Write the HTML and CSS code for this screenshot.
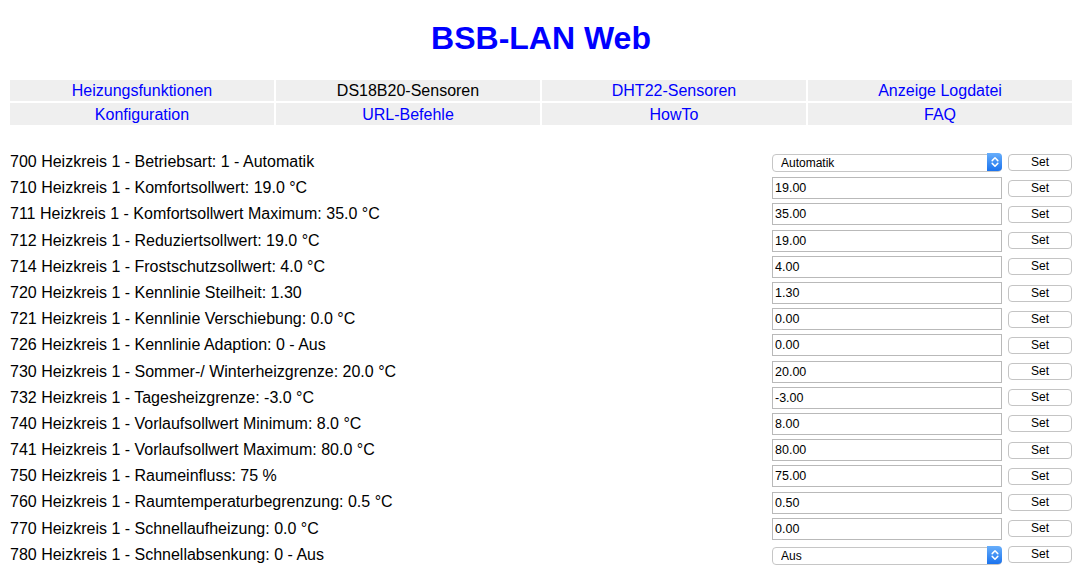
FILE: index.html
```html
<!DOCTYPE html>
<html lang="de">
<head>
<meta charset="utf-8">
<title>BSB-LAN Web</title>
<link rel="stylesheet" href="styles.css">
</head>
<body>
<h1 class="title">BSB-LAN Web</h1>
<nav class="nav">
  <a class="nav-cell" href="#">Heizungsfunktionen</a>
  <span class="nav-cell nav-current">DS18B20-Sensoren</span>
  <a class="nav-cell" href="#">DHT22-Sensoren</a>
  <a class="nav-cell" href="#">Anzeige Logdatei</a>
  <a class="nav-cell" href="#">Konfiguration</a>
  <a class="nav-cell" href="#">URL-Befehle</a>
  <a class="nav-cell" href="#">HowTo</a>
  <a class="nav-cell" href="#">FAQ</a>
</nav>
<div class="params">
  <div class="label">700 Heizkreis 1 - Betriebsart: 1 - Automatik</div>
  <div class="select-wrap"><select class="sel"><option>Automatik</option></select><span class="sel-arrow"><svg width="8" height="12" viewBox="0 0 8 12"><path d="M1.2 4.6 L4 1.8 L6.8 4.6 M1.2 7.4 L4 10.2 L6.8 7.4" fill="none" stroke="#fff" stroke-width="1.5" stroke-linecap="round" stroke-linejoin="round"/></svg></span></div>
  <button class="set">Set</button>

  <div class="label">710 Heizkreis 1 - Komfortsollwert: 19.0 °C</div>
  <input class="val" value="19.00"><button class="set">Set</button>

  <div class="label">711 Heizkreis 1 - Komfortsollwert Maximum: 35.0 °C</div>
  <input class="val" value="35.00"><button class="set">Set</button>

  <div class="label">712 Heizkreis 1 - Reduziertsollwert: 19.0 °C</div>
  <input class="val" value="19.00"><button class="set">Set</button>

  <div class="label">714 Heizkreis 1 - Frostschutzsollwert: 4.0 °C</div>
  <input class="val" value="4.00"><button class="set">Set</button>

  <div class="label">720 Heizkreis 1 - Kennlinie Steilheit: 1.30</div>
  <input class="val" value="1.30"><button class="set">Set</button>

  <div class="label">721 Heizkreis 1 - Kennlinie Verschiebung: 0.0 °C</div>
  <input class="val" value="0.00"><button class="set">Set</button>

  <div class="label">726 Heizkreis 1 - Kennlinie Adaption: 0 - Aus</div>
  <input class="val" value="0.00"><button class="set">Set</button>

  <div class="label">730 Heizkreis 1 - Sommer-/ Winterheizgrenze: 20.0 °C</div>
  <input class="val" value="20.00"><button class="set">Set</button>

  <div class="label">732 Heizkreis 1 - Tagesheizgrenze: -3.0 °C</div>
  <input class="val" value="-3.00"><button class="set">Set</button>

  <div class="label">740 Heizkreis 1 - Vorlaufsollwert Minimum: 8.0 °C</div>
  <input class="val" value="8.00"><button class="set">Set</button>

  <div class="label">741 Heizkreis 1 - Vorlaufsollwert Maximum: 80.0 °C</div>
  <input class="val" value="80.00"><button class="set">Set</button>

  <div class="label">750 Heizkreis 1 - Raumeinfluss: 75 %</div>
  <input class="val" value="75.00"><button class="set">Set</button>

  <div class="label">760 Heizkreis 1 - Raumtemperaturbegrenzung: 0.5 °C</div>
  <input class="val" value="0.50"><button class="set">Set</button>

  <div class="label">770 Heizkreis 1 - Schnellaufheizung: 0.0 °C</div>
  <input class="val" value="0.00"><button class="set">Set</button>

  <div class="label">780 Heizkreis 1 - Schnellabsenkung: 0 - Aus</div>
  <div class="select-wrap"><select class="sel"><option>Aus</option></select><span class="sel-arrow"><svg width="8" height="12" viewBox="0 0 8 12"><path d="M1.2 4.6 L4 1.8 L6.8 4.6 M1.2 7.4 L4 10.2 L6.8 7.4" fill="none" stroke="#fff" stroke-width="1.5" stroke-linecap="round" stroke-linejoin="round"/></svg></span></div>
  <button class="set">Set</button>
</div>
</body>
</html>
```

FILE: styles.css
```css
html {
  scrollbar-width: none;
  overflow: hidden;
}
html::-webkit-scrollbar { display: none; }

body {
  margin: 0;
  padding: 20px 8px 0;
  font-family: "Liberation Sans", Arial, Helvetica, sans-serif;
  font-size: 16px;
  color: #000;
  background: #fff;
}

.title {
  margin: 0 0 21px;
  font-size: 32px;
  line-height: 37px;
  font-weight: bold;
  text-align: center;
  color: #0000ff;
}

.nav {
  display: grid;
  grid-template-columns: repeat(4, 1fr);
  grid-template-rows: 21px 22px;
  gap: 2px;
  padding: 2px;
}

.nav-cell {
  display: flex;
  align-items: center;
  justify-content: center;
  padding-top: 1px;
  background: #efefef;
  color: #0000ff;
  text-decoration: none;
  font-size: 16px;
}

.nav-current {
  color: #000;
}

.params {
  margin-top: 22px;
  padding: 0 2px;
  display: grid;
  grid-template-columns: 1fr 230px 64px;
  grid-auto-rows: 26.2px;
  column-gap: 6px;
  align-items: center;
}

.label {
  line-height: 26.2px;
  white-space: nowrap;
}

.val {
  box-sizing: border-box;
  width: 230px;
  height: 22px;
  margin: 0;
  padding: 0 2px;
  border: 1px solid #b9b9b9;
  border-radius: 0;
  font-family: "Liberation Sans", Arial, sans-serif;
  font-size: 12.5px;
  color: #000;
  background: #fff;
  outline: none;
}

.select-wrap {
  position: relative;
  width: 230px;
  height: 18px;
}

.sel {
  -webkit-appearance: none;
  appearance: none;
  box-sizing: border-box;
  width: 230px;
  height: 18px;
  margin: 0;
  padding: 0 20px 0 8px;
  border: 1px solid #c6c6c6;
  border-radius: 4px;
  background: #fff;
  font-family: "Liberation Sans", Arial, sans-serif;
  font-size: 12px;
  color: #000;
  outline: none;
}

.sel-arrow {
  position: absolute;
  top: 0;
  right: 0;
  width: 15px;
  height: 18px;
  box-sizing: border-box;
  border-radius: 0 4px 4px 0;
  background: linear-gradient(#67aefb, #1b73ee);
  display: flex;
  align-items: center;
  justify-content: center;
  pointer-events: none;
}

.set {
  box-sizing: border-box;
  width: 64px;
  height: 17px;
  margin: 0;
  padding: 0;
  border: 1px solid #c4c4c4;
  border-radius: 4px;
  background: #fff;
  font-family: "Liberation Sans", Arial, sans-serif;
  font-size: 12px;
  color: #000;
  line-height: 15px;
}
```
